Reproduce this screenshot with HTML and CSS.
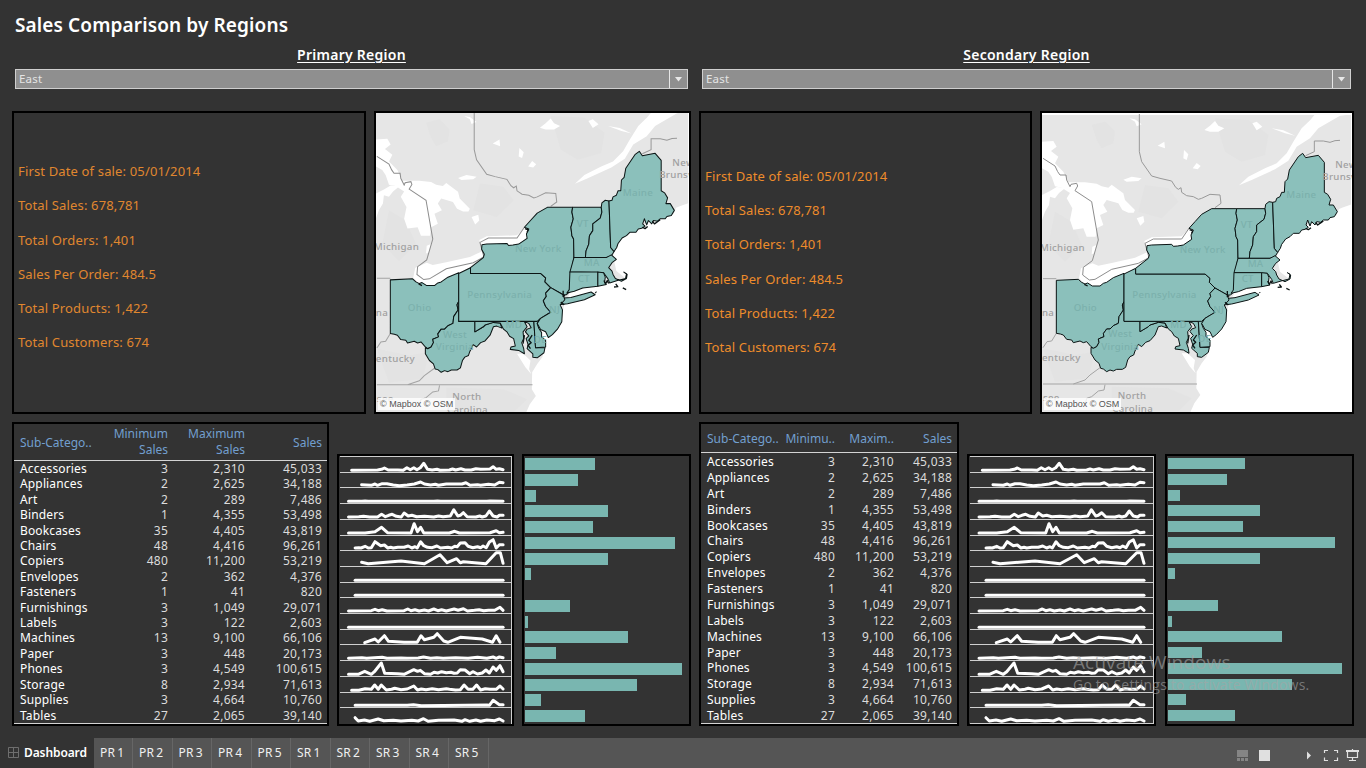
FILE: index.html
```html
<!DOCTYPE html>
<html lang="en">
<head>
<meta charset="utf-8">
<title>Sales Comparison by Regions</title>
<link rel="stylesheet" href="styles.css">
</head>
<body>
<svg class="defs" width="0" height="0" aria-hidden="true">
  <defs>
    <g id="region-map">
      <rect x="21" y="30" width="927" height="892" fill="#e6e6e6"/>
      <path fill="#e3e3e3" d="M170 60L210 50 240 80 235 115 200 130 185 105ZM540 40L640 45 700 90 690 150 620 170 570 140ZM330 240L400 250 430 290 380 340 310 320ZM60 320L110 350 140 420 90 470 40 420ZM24 730L120 750 180 740 160 820 60 830ZM230 845L400 850 470 880 430 918 230 918Z"/>
      <g fill="#fff">
        <path d="M951 298L925 307 912 312 905 330 820 360 765 388 740 420 725 455 735 500 760 520 700 537 600 560 580 600 570 650 535 695 505 660 525 725 515 755 500 775 485 800 484 850 496 870 478 895 465 924 951 924Z"/>
        <path d="M21 110L55 108 65 125 48 138 70 155 60 175 85 200 100 232 150 232 185 236 200 244 220 248 230 239 265 265 270 285 300 315 296 323 280 323 262 315 250 295 215 285 205 300 217 320 195 330 205 360 185 370 182 395 155 395 145 370 115 374 105 345 112 310 95 280 105 264 80 248 60 244 50 215 40 200 21 190Z"/>
        <path d="M21 270L45 258 65 246 92 248 72 264 60 280 45 275 42 300 30 320 21 345ZM172 425L184 420 178 445 170 448Z"/>
        <path d="M138 490L172 475 190 482 230 474 300 458 340 440 345 450 300 488 265 508 235 520 205 540 185 545 165 540 145 533 132 520ZM328 408L350 397 440 394 462 372 474 375 472 400 445 420 410 424 395 418 335 427Z"/>
        <path d="M951 28L840 28 826 45 800 70 775 110 755 145 725 175 690 190 640 215 612 241 650 225 720 193 760 167 785 125 825 100 850 70 915 32ZM508 75L525 62 540 48 550 62 568 70 550 80 525 80ZM652 55L665 50 682 65 665 76ZM283 40L300 43 320 58 305 64 300 50ZM368 122L388 110 390 130ZM447 135L460 148 455 165 445 160ZM473 190L485 174 497 183 488 193ZM265 224L290 215 320 220 310 228 275 230ZM305 340L325 333 328 350 316 362ZM710 70L745 76 780 92 750 85Z"/>
        <path d="M456 745L466 752 480 765 476 790 482 805 465 785 440 745Z"/>
      </g>
      <g fill="none" stroke="#a4a4a4" stroke-width="3">
        <path stroke="#8d8d8d" d="M24 160L60 183 68 200 75 210 93 210 95 225 105 245 108 238 125 235 128 243 120 257 170 290 190 405 172 467 145 487 143 510 163 525 180 523 230 493 310 475 342 458 330 415 355 402 440 402 462 370"/>
        <path stroke="#999" d="M313 27V140L320 170 350 213 375 220 410 228 422 247 430 253 438 248 440 262 455 272 475 275 490 283 500 280 525 268 555 270 558 295 540 308M812 152L838 140V108H865L885 112 900 107 915 106"/>
        <path d="M24 521H64M64 685L50 708 36 710 24 728M24 837H486M115 837L150 825 165 810 195 788M210 839L207 855 190 858 170 875 155 880 150 900"/>
      </g>
      <g fill="#8bc0bb" stroke="#0b1414" stroke-width="3" stroke-linejoin="round">
        <path d="M64 526L130 523 140 532 150 537 158 534 172 543 195 543 205 535 215 532 235 518 267 505V590L262 600 265 615 252 635 250 655 235 662 225 672 215 672 205 686 207 695 190 702 192 712 185 725 175 730 168 725 155 710 145 713 135 708 115 713 110 705 95 703 85 690 76 687 64 685Z"/>
        <path d="M267 590L262 600 265 615 252 635 250 655 235 662 225 672 215 672 205 686 207 695 190 702 192 712 185 725 175 730 168 727 168 745 180 765 192 775 197 790 205 792 215 800 225 795 235 798 245 793 262 793 272 787 278 765 285 755 296 750 300 738 310 718 320 725 332 712 345 707 360 690 370 665 380 663 395 669 390 654 370 652 345 660 340 665 315 680V649H267Z"/>
        <path d="M315 649H490L495 727H523L520 742 500 757 487 755 487 745 470 730 473 718 467 700 475 692 465 680 470 672 482 668 475 655 462 650 470 665 458 680 460 700 454 712 460 730 462 745 445 735 420 732 422 725 435 722 430 700 418 693 410 680 400 672 390 654 370 652 345 660 340 665 315 680Z"/>
        <path d="M490 649L497 643 507 645 500 656 505 670 513 682 513 695 525 705 525 725 495 727Z"/>
        <path d="M267 507L302 490V507H510L525 520 523 532 540 549 525 565 527 575 518 588 525 605 540 622 510 640 500 649H267Z"/>
        <path d="M302 490L340 460 343 450 335 435 336 422 350 420 410 418 415 424 428 423 445 420 470 403 468 390 475 375 462 370 480 350 500 328 530 311H605L603 325 607 345 600 370 603 395 608 405 609 460 600 505 597 560 587 570 577 570 540 549 523 532 525 520 510 507H302Z"/>
        <path d="M580 580L600 578 660 562 672 570 640 585 590 597 565 600 575 588ZM672 565L676 561"/>
        <path d="M540 549L577 570 582 585 568 600 575 615 573 650 560 672 545 688 533 697 525 680 510 673 500 655 510 640 540 622 525 605 518 588 527 575 525 565Z"/>
        <path d="M605 311H690L692 325 687 343 665 360 665 380 655 395 653 420 645 440 643 460H609L608 405 603 395 600 370 607 345 603 325Z"/>
        <path d="M690 311L692 298 702 290 713 292 718 430 728 442 720 455 705 460H643L645 440 653 420 655 395 665 380 665 360 687 343 692 325Z"/>
        <path d="M713 292L722 290 725 280 735 275 740 262 748 262 750 230 758 222 763 195 790 155 803 145 812 158 850 151 868 172V262L878 268 887 283 882 300 895 300 907 320 898 335 885 338 880 345 865 345 857 352 845 350 840 360 830 350 825 363 818 345 813 360 820 367 810 373 800 375 793 385 775 385 765 395 752 402 740 418 736 430 728 442 718 430Z"/>
        <path d="M609 460H705L720 452 735 465 722 475 712 490 722 500 725 510 732 522 750 530 765 522 767 510 757 503 765 508 762 522 738 528 715 535 710 523 697 505 597 503Z"/>
        <path d="M597 503H680V545L635 550 610 560 588 565 595 555Z"/>
        <path d="M680 503L697 505 702 518 700 533 705 540 680 545Z"/>
        <path fill="none" stroke-width="4" d="M698 528L703 538 708 528 712 537M728 547L739 546 733 538M754 550L764 555M812 370L820 374 828 368M842 352L848 360 858 353 865 348M148 538L158 543M464 374L473 378 470 385M570 592L580 600M462 690L458 715M485 690L475 705 482 712 473 720 480 730M577 558V575L583 572"/>
      </g>
      <g class="map-label">
        <text x="15" y="438">Michigan</text>
        <text x="901" y="188">New</text>
        <text x="862" y="225">Brunswick</text>
        <text x="21" y="632">na</text>
        <text x="21" y="768">entucky</text>
        <text x="24" y="888">see</text>
        <text x="248" y="883">North</text>
        <text x="232" y="921">Carolina</text>
      </g>
      <g class="map-label map-label--dim">
        <text x="754" y="278">Maine</text>
        <text x="617" y="369">VT</text>
        <text x="434" y="443">New York</text>
        <text x="638" y="485">MA</text>
        <text x="620" y="531">CT</text>
        <text x="292" y="580">Pennsylvania</text>
        <text x="116" y="617">Ohio</text>
        <text x="535" y="624">NJ</text>
        <text x="406" y="668">MD</text>
        <text x="490" y="712">DE</text>
        <text x="220" y="697">West</text>
        <text x="199" y="735">Virginia</text>
      </g>
    </g>
  </defs>
</svg>

<div class="dashboard">
  <h1 class="title">Sales Comparison by Regions</h1>
  <div class="regions">
    <section class="region region--primary" data-spark-scale="0.937" data-bars="70,53,11,83,68,150,83,6,0,45,3,103,31,157,112,16,60">
      <h2 class="region-title">Primary Region</h2>
      <div class="filter"><span class="filter-value">East</span><span class="filter-arrow"><svg width="9" height="5"><path d="M1 0H8L4.500 4.500Z" fill="#e8e8e8"/></svg></span></div>
      <div class="summary">
        <div class="panel facts">
          <p>First Date of sale: 05/01/2014</p><p>Total Sales: 678,781</p><p>Total Orders: 1,401</p><p>Sales Per Order: 484.5</p><p>Total Products: 1,422</p><p>Total Customers: 674</p>
        </div>
        <div class="panel map">
          <svg class="map-drawing" viewBox="18 24 939 897" preserveAspectRatio="none"><use href="#region-map" transform="matrix(1.0107 0 0 1.0122 -3.700 -7.800)"/></svg>
          <span class="credit">© Mapbox © OSM</span>
        </div>
      </div>
      <div class="charts">
        <div class="panel table">
          <div class="row head"><span>Sub-Catego..</span><span>Minimum<br>Sales</span><span>Maximum<br>Sales</span><span>Sales</span></div>
          <div class="body"></div>
        </div>
        <div class="panel sparks"></div>
        <div class="panel bars"></div>
      </div>
    </section>
    <section class="region region--secondary" data-spark-scale="1" data-bars="77,59,12,92,75,167,92,7,0,50,4,114,34,174,124,18,67">
      <h2 class="region-title">Secondary Region</h2>
      <div class="filter"><span class="filter-value">East</span><span class="filter-arrow"><svg width="9" height="5"><path d="M1 0H8L4.500 4.500Z" fill="#e8e8e8"/></svg></span></div>
      <div class="summary">
        <div class="panel facts">
          <p>First Date of sale: 05/01/2014</p><p>Total Sales: 678,781</p><p>Total Orders: 1,401</p><p>Sales Per Order: 484.5</p><p>Total Products: 1,422</p><p>Total Customers: 674</p>
        </div>
        <div class="panel map">
          <svg class="map-drawing" viewBox="21 24 930 897" preserveAspectRatio="none"><use href="#region-map"/></svg>
          <span class="credit">© Mapbox © OSM</span>
        </div>
      </div>
      <div class="charts">
        <div class="panel table">
          <div class="row head"><span>Sub-Catego..</span><span>Minimu..</span><span>Maxim..</span><span>Sales</span></div>
          <div class="body"></div>
        </div>
        <div class="panel sparks"></div>
        <div class="panel bars"></div>
      </div>
    </section>
  </div>
</div>

<nav class="tabs">
  <span class="tab tab--active"><svg width="11" height="11" fill="none" stroke="#6e6e6e"><path d="M.5 .5H10.500V10.500H.5ZM5.500 .5V10.500M.5 5.500H10.500"/></svg>Dashboard</span>
  <span class="tab tab--first">PR 1</span><span class="tab">PR 2</span><span class="tab">PR 3</span><span class="tab">PR 4</span><span class="tab">PR 5</span><span class="tab">SR 1</span><span class="tab">SR 2</span><span class="tab">SR 3</span><span class="tab">SR 4</span><span class="tab">SR 5</span>
  <svg class="tools" width="130" height="14">
    <path fill="#858585" d="M1 1H12V8H1ZM1 9H4V12H1ZM5 9H8V12H5ZM9 9H12V12H9Z"/>
    <path fill="#e0e0e0" d="M23 1H34V12H23ZM71 2.500L75 6.500 71 10.500Z"/>
    <path fill="none" stroke="#e0e0e0" stroke-width="1.200" d="M88.500 4V1.500H92M98 1.500H101.500V4M101.500 8.500V11.500H98M92 11.500H88.500V8.500"/>
    <path fill="none" stroke="#e0e0e0" stroke-width="1.200" d="M111.500 2V8.500H121.500V2M116.500 0V1.500M116.500 8.500V11M113 11.500H120"/>
    <path fill="#e0e0e0" d="M110 1H123V3H110Z"/>
  </svg>
</nav>

<div class="watermark"><div class="watermark-title">Activate Windows</div><div class="watermark-text">Go to Settings to activate Windows.</div></div>
<script src="app.js"></script>
</body>
</html>
```
FILE: styles.css
```css
* { box-sizing: border-box; }
body {
  margin: 0;
  width: 1366px;
  height: 768px;
  overflow: hidden;
  display: flex;
  flex-direction: column;
  background: #333;
  color: #fff;
  font: 12px/16px "Noto Sans", "Open Sans", sans-serif;
}
.defs { position: absolute; }
.dashboard { height: 738px; padding: 12px 12px 0; }
.title { margin: 0 0 0 3px; font-size: 19px; line-height: 26px; font-weight: 600; letter-spacing: 0.12px; }
.regions { display: flex; gap: 8px; }
.region--primary { width: 679px; }
.region--secondary { width: 655px; }
.region-title {
  margin: 7px 0 0;
  height: 24px;
  text-align: center;
  font-size: 14px;
  line-height: 20px;
  font-weight: 600;
  letter-spacing: 0.26px;
  text-decoration: underline;
  text-decoration-thickness: 1px;
  text-underline-offset: 2px;
}
.filter {
  display: flex;
  height: 20px;
  margin: 0 3px 22px;
  background: #8f8f8f;
  border: 1px solid #cfcfcf;
  color: #e4e4e4;
}
.filter-value { flex: 1; padding-left: 3px; line-height: 18px; font-size: 11.500px; letter-spacing: 0.2px; }
.filter-arrow { width: 18px; border-left: 1px solid #e6e6e6; display: flex; align-items: center; justify-content: center; }
.panel { border: 2px solid #000; }
.summary { display: flex; gap: 8px; height: 303px; }
.facts {
  flex: 1;
  display: flex;
  flex-direction: column;
  gap: 14.300px;
  padding: 48px 0 0 4px;
  color: #e0872f;
  font-size: 13px;
  line-height: 20px;
  letter-spacing: 0.15px;
}
.facts p { margin: 0; }
.region--secondary .facts { padding-top: 53px; gap: 14.200px; color: #ee8c2b; }
.map { position: relative; width: 317px; background: #fff; overflow: hidden; }
.region--secondary .map { width: 314px; }
.map-drawing { display: block; width: 100%; height: 299px; }
.map-label { font: 500 29px "Noto Sans", sans-serif; fill: #a0a0a0; letter-spacing: 0.9px; }
.map-label--dim { fill: #7bb0ac; }
.credit {
  position: absolute;
  left: 2px;
  bottom: 2px;
  padding: 0 2px;
  background: rgba(255, 255, 255, 0.8);
  color: #555;
  font: 9px/12px "Liberation Sans", Arial, sans-serif;
}
.charts { display: flex; gap: 8px; margin-top: 8px; height: 304px; align-items: flex-end; }
.table { width: 317px; height: 304px; display: flex; flex-direction: column; }
.row { display: grid; grid-template-columns: 78px 70px 77px 77px; padding-left: 6px; }
.row span { text-align: right; white-space: nowrap; letter-spacing: 0.25px; }
.row span:first-child { text-align: left; }
.head { height: 37px; align-items: center; border-bottom: 1px solid #d4d4d4; color: #729fcf; }
.head span { letter-spacing: 0; }
.head span:first-child, .head span:last-child { padding-top: 2px; }
.body { flex: 1; display: flex; flex-direction: column; border-bottom: 1px solid #d4d4d4; }
.body .row { flex: 1 1 0; line-height: 15px; min-height: 0; color: #dcdcdc; }
.body .row span:first-child { color: #fff; letter-spacing: 0.15px; }
.region--secondary .table { width: 260px; }
.region--secondary .row { grid-template-columns: 78px 50px 59px 58px; }
.region--secondary .head { height: 29px; }
.region--secondary .head span { padding-top: 2px; }
.region--secondary .body .row { line-height: 17px; }
.sparks { width: 177px; height: 272px; }
.region--secondary .sparks { width: 189px; }
.sparks svg { display: block; }
.bars { flex: 1; height: 272px; padding-left: 1px; display: flex; flex-direction: column; }
.region--secondary .sparks { margin-right: 1px; }
.bar-row { height: 15.750px; padding-top: 2px; }
.bar { height: 12px; background: #79b6b0; }
.region--secondary .bar { height: 11px; }
.tabs { display: flex; height: 30px; background: #555; line-height: 29px; }
.tab { width: 39.500px; padding-left: 6px; border-right: 1px solid #666; font-size: 12px; color: #f0f0f0; white-space: nowrap; word-spacing: -1px; letter-spacing: 0.15px; }
.tab--active { width: 94px; padding-left: 8px; padding-bottom: 2px; display: flex; align-items: center; gap: 5px; border: 0; background: #333; color: #fff; font-weight: 600; letter-spacing: -0.1px; }
.tab--first { width: 39px; }
.tools { margin: 11px 0 0 auto; width: 130px; }
.watermark { position: absolute; left: 1073px; top: 649px; color: rgba(165, 165, 165, 0.62); font-family: "Open Sans", "Noto Sans", sans-serif; white-space: nowrap; }
.watermark-title { font-size: 19px; line-height: 26px; letter-spacing: 0.1px; }
.watermark-text { font-size: 14px; line-height: 20px; letter-spacing: 0.2px; }
```
FILE: app.js
```js
const rows = [
  ["Accessories", "3", "2,310", "45,033", "67,76 150,75 163,73 172,69 184,75 215,75 232,76 244,68 255,74 266,68 276,74 287,68 298,55 310,73 325,75 340,73 350,76 380,75 390,72 400,75 417,71 430,75 450,75 465,71 480,73 510,72 520,65 530,73 540,71 552,74"],
  ["Appliances", "2", "2,625", "34,188", "99,119 130,121 142,117 150,121 165,116 180,116 200,120 220,122 245,120 268,117 288,111 300,117 320,120 335,118 345,121 370,117 400,117 420,117 433,113 446,121 470,119 480,121 505,118 525,120 540,112 552,113"],
  ["Art", "2", "289", "7,486", "57,169 100,169 110,168 120,169 330,169 342,168 352,169 500,169 510,168 552,169"],
  ["Binders", "1", "4,355", "53,498", "57,216 90,215 105,214 125,216 150,216 163,208 175,215 186,211 197,208 210,214 226,216 235,204 248,213 260,211 275,215 300,214 330,216 345,213 360,215 383,213 394,194 407,213 415,211 425,203 437,215 465,216 477,213 485,216 497,213 508,198 520,213 533,216 540,211 552,211"],
  ["Bookcases", "35", "4,405", "43,819", "57,264 110,264 142,260 163,247 182,263 257,264 267,236 278,260 288,247 298,264 380,264 397,259 412,264 510,263 530,257 540,263 552,262"],
  ["Chairs", "48", "4,416", "96,261", "78,309 90,308 97,309 110,304 120,309 130,308 142,290 160,302 172,300 183,309 192,307 200,309 215,307 235,307 248,303 260,309 270,305 277,309 288,290 298,302 310,307 325,308 340,303 352,309 375,307 387,309 397,304 405,305 415,294 430,293 440,304 455,308 470,305 480,308 488,303 498,308 508,291 520,284 530,309 540,299 552,299"],
  ["Copiers", "480", "11,200", "53,219", "99,352 120,356 225,348 300,356 350,329 373,353 403,341 415,353 425,350 497,356 530,323 543,323 552,355"],
  ["Envelopes", "2", "362", "4,376", "78,406 552,406"],
  ["Fasteners", "1", "41", "820", "78,451 552,451"],
  ["Furnishings", "3", "1,049", "29,071", "57,498 130,497 142,493 152,497 165,494 180,498 235,497 247,492 257,497 270,494 283,498 300,495 313,498 330,492 343,497 355,494 370,498 395,492 408,496 425,491 438,498 460,496 475,494 490,497 505,496 525,496 542,487 552,496"],
  ["Labels", "3", "122", "2,603", "57,547 552,547"],
  ["Machines", "13", "9,100", "66,106", "109,593 142,582 152,591 172,572 185,589 235,592 277,592 289,572 300,584 330,577 341,566 362,588 375,592 415,577 485,582 518,592 530,572 542,592"],
  ["Paper", "3", "448", "20,173", "57,640 100,638 115,640 165,637 180,640 225,639 245,640 280,639 297,636 320,640 340,638 360,640 400,638 440,640 470,637 500,640 520,636 530,640 540,636 552,638"],
  ["Phones", "3", "4,549", "100,615", "57,688 88,688 109,679 130,688 140,680 162,654 173,685 215,686 235,688 266,674 278,679 287,676 300,686 320,688 331,682 343,684 355,680 370,683 385,682 395,685 405,684 415,674 430,675 445,686 455,680 470,687 485,684 497,675 508,684 520,666 530,676 542,662 552,680"],
  ["Storage", "8", "2,934", "71,613", "67,736 90,736 110,731 130,733 141,720 152,733 162,720 178,735 195,733 205,730 225,734 245,732 266,723 278,735 290,732 305,734 325,731 345,734 370,731 380,733 400,735 415,734 427,720 440,733 455,733 467,720 480,735 495,731 510,733 530,733 542,723 552,732"],
  ["Supplies", "3", "4,664", "10,760", "78,781 245,781 265,779 290,782 500,780 508,781 520,766 540,779 552,779"],
  ["Tables", "27", "2,065", "39,140", "78,818 88,828 108,825 125,829 152,822 170,827 200,826 225,828 260,826 280,828 297,821 312,829 345,826 395,825 420,829 430,824 445,829 465,825 480,829 500,825 525,827 540,822 552,828"]
];
const dividers = [0, 16, 31, 47, 63, 79, 94, 110, 126, 141, 157, 173, 188, 204, 220, 236, 251, 267];

document.querySelectorAll(".region").forEach((region) => {
  region.querySelector(".body").innerHTML = rows
    .map((r) => `<div class="row">${r.slice(0, 4).map((c) => `<span>${c}</span>`).join("")}</div>`)
    .join("");

  const scale = Number(region.dataset.sparkScale);
  const primary = scale < 1;
  const width = primary ? 173 : 185;
  const start = primary ? 9.5 : 10;
  const lines = rows.map((r) => {
    const points = r[4].split(" ").map((p) => {
      const [x, y] = p.split(",").map(Number);
      return `${(start + ((x - 57) * scale) / 3).toFixed(1)},${(y / 3 - 11).toFixed(1)}`;
    });
    return `<polyline points="${points.join(" ")}"/>`;
  });
  const rules = dividers.slice(0, primary ? 17 : 18).map((y) => `M1 ${y + 0.5}H${width}`).join("");
  region.querySelector(".sparks").innerHTML =
    `<svg width="${width}" height="268" fill="none"><path stroke="#cfcfcf" d="${rules}M${width - 0.5} 0V268"/>` +
    `<g stroke="#fff" stroke-width="3" stroke-linejoin="round" stroke-linecap="round">${lines.join("")}</g></svg>`;

  region.querySelector(".bars").innerHTML = region.dataset.bars
    .split(",")
    .map((w) => `<div class="bar-row"><div class="bar" style="width:${w}px"></div></div>`)
    .join("");
});
```
